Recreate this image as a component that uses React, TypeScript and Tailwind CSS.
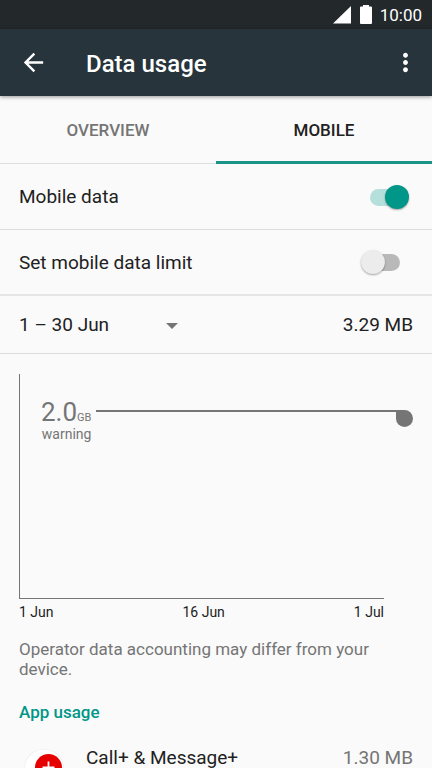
import React, { useState } from "react";
import { MdArrowBack, MdMoreVert } from "react-icons/md";

type Tab = "overview" | "mobile";

interface AppUsage {
  name: string;
  amount: string;
}

const tabs: { id: Tab; label: string }[] = [
  { id: "overview", label: "OVERVIEW" },
  { id: "mobile", label: "MOBILE" },
];

const apps: AppUsage[] = [{ name: "Call+ & Message+", amount: "1.30 MB" }];

const StatusBar = () => (
  <div className="flex h-[29px] shrink-0 items-center justify-end bg-[#23282b] pr-[10px] text-white">
    <svg className="h-[18px] w-[18px]" viewBox="0 0 18 18" fill="currentColor" aria-label="Signal">
      <path d="M18 0v17.500H0z" />
    </svg>
    <svg className="ml-[9px] h-[19px] w-3" viewBox="0 0 12 19" fill="currentColor" aria-label="Battery">
      <path d="M3 0h6v1.500h2q1 0 1 1V18q0 1-1 1H1q-1 0-1-1V2.500q0-1 1-1h2z" />
    </svg>
    <span className="ml-2 text-[17px] leading-5">10:00</span>
  </div>
);

type SwitchProps = {
  id: string;
  checked: boolean;
  onChange: (checked: boolean) => void;
};

// the before element is the track, the after element is the thumb
const Switch = ({ id, checked, onChange }: SwitchProps) => (
  <input
    id={id}
    type="checkbox"
    role="switch"
    checked={checked}
    onChange={(e) => onChange(e.target.checked)}
    className="relative h-6 w-12 shrink-0 cursor-pointer appearance-none before:absolute before:top-[4px] before:left-[9px] before:h-[17px] before:w-[30px] before:rounded-full before:bg-[#b9b9b9] after:absolute after:top-0 after:left-0 after:size-6 after:rounded-full after:bg-[#ececec] after:shadow-[0_1px_2px_rgba(0,0,0,0.35)] checked:before:bg-[#b5dfdb] checked:after:left-6 checked:after:bg-[#009688]"
  />
);

const UsageChart = () => (
  <section aria-label="Usage chart" className="pt-5 pr-12 pl-[19px]">
    <div className="h-[225px] border-b border-l border-[#757575] pt-6">
      <div className="-mr-[29px] flex items-start pl-[21px]">
        <div className="text-right text-[#757575]">
          <div className="text-[26px] leading-7">
            2.0<span className="text-[11px] leading-none">GB</span>
          </div>
          <div className="text-sm leading-4">warning</div>
        </div>
        <div className="mt-3 ml-[5px] h-[2px] flex-1 bg-[#757575]" />
        <div className="mt-3 size-[17px] rounded-full rounded-tl-none bg-[#757575]" />
      </div>
    </div>
    <div className="flex justify-between pt-[3px] text-sm leading-5 text-[#212121]">
      <span>1 Jun</span>
      <span>16 Jun</span>
      <span>1 Jul</span>
    </div>
  </section>
);

export default function App() {
  const [tab, setTab] = useState<Tab>("mobile");
  const [mobileData, setMobileData] = useState(true);
  const [limit, setLimit] = useState(false);

  return (
    <div className="flex h-screen flex-col overflow-hidden bg-[#fafafa] font-[Roboto,sans-serif] text-[#212121]">
      <StatusBar />
      <header className="relative z-10 flex h-[67px] shrink-0 items-center bg-[#27343b] pr-3 pl-[19px] text-white shadow-[0_1px_4px_rgba(0,0,0,0.4)]">
        <button type="button" aria-label="Back">
          <MdArrowBack className="size-[29px]" />
        </button>
        <h1 className="ml-[38px] flex-1 pt-0.5 text-2xl font-medium">Data usage</h1>
        <button type="button" aria-label="More options">
          <MdMoreVert className="size-[29px]" />
        </button>
      </header>

      <main className="flex-1 overflow-y-auto [scrollbar-width:none]">
        <nav role="tablist" className="flex h-[68px] border-b border-[#dcdfe0]">
          {tabs.map((t) => (
            <button
              key={t.id}
              type="button"
              role="tab"
              aria-selected={tab === t.id}
              onClick={() => setTab(t.id)}
              className={
                tab === t.id
                  ? "-mb-px flex-1 border-b-[3px] border-[#1a9488] pt-[5px] text-[17px] font-medium text-[#212121]"
                  : "flex-1 pt-[3px] text-[17px] font-medium text-[#757575]"
              }
            >
              {t.label}
            </button>
          ))}
        </nav>

        <div className="flex h-[66px] items-center justify-between border-b border-[#dcdcdc] pr-[23px] pl-[19px]">
          <label htmlFor="mobile-data" className="pt-0.5 text-[19px]">Mobile data</label>
          <Switch id="mobile-data" checked={mobileData} onChange={setMobileData} />
        </div>
        <div className="flex h-[66px] items-center justify-between border-b-2 border-[#e5e5e5] pr-[23px] pl-[19px]">
          <label htmlFor="data-limit" className="pt-[3px] text-[19px]">Set mobile data limit</label>
          <Switch id="data-limit" checked={limit} onChange={setLimit} />
        </div>
        <div className="flex h-[58px] items-center justify-between border-b border-[#dcdcdc] px-[19px] pt-0.5 text-[19px]">
          <div className="relative flex w-40 items-center">
            <select aria-label="Usage cycle" className="w-full appearance-none bg-transparent">
              <option>1 – 30 Jun</option>
            </select>
            <svg className="pointer-events-none absolute right-px h-[6px] w-3 text-[#757575]" viewBox="0 0 12 6" fill="currentColor">
              <path d="M0 0h12L6 6z" />
            </svg>
          </div>
          <span>3.29 MB</span>
        </div>

        <UsageChart />

        <p className="px-[19px] pt-[17px] text-[17px] leading-5 text-[#757575]">
          Operator data accounting may differ from your device.
        </p>

        <h2 className="px-[19px] pt-[23px] text-[17px] leading-5 font-medium text-[#009688]">App usage</h2>
        <ul>
          {apps.map((app) => (
            <li key={app.name} className="flex items-start px-[19px] pt-6 leading-6">
              <svg className="mt-px size-12 shrink-0" viewBox="0 0 48 48" aria-hidden="true">
                <circle cx="25" cy="22" r="20" fill="#e9e9e9" />
                <circle cx="25" cy="22" r="19.500" fill="#fff" />
                <circle cx="29.500" cy="20.500" r="13.500" fill="#e60000" />
                <path d="M29.500 14.500v12M23.500 20.500h12" stroke="#fff" strokeWidth="1.800" />
              </svg>
              <span className="ml-[19px] flex-1 text-[19px]">{app.name}</span>
              <span className="text-[19px] text-[#757575]">{app.amount}</span>
            </li>
          ))}
        </ul>
      </main>
    </div>
  );
}
